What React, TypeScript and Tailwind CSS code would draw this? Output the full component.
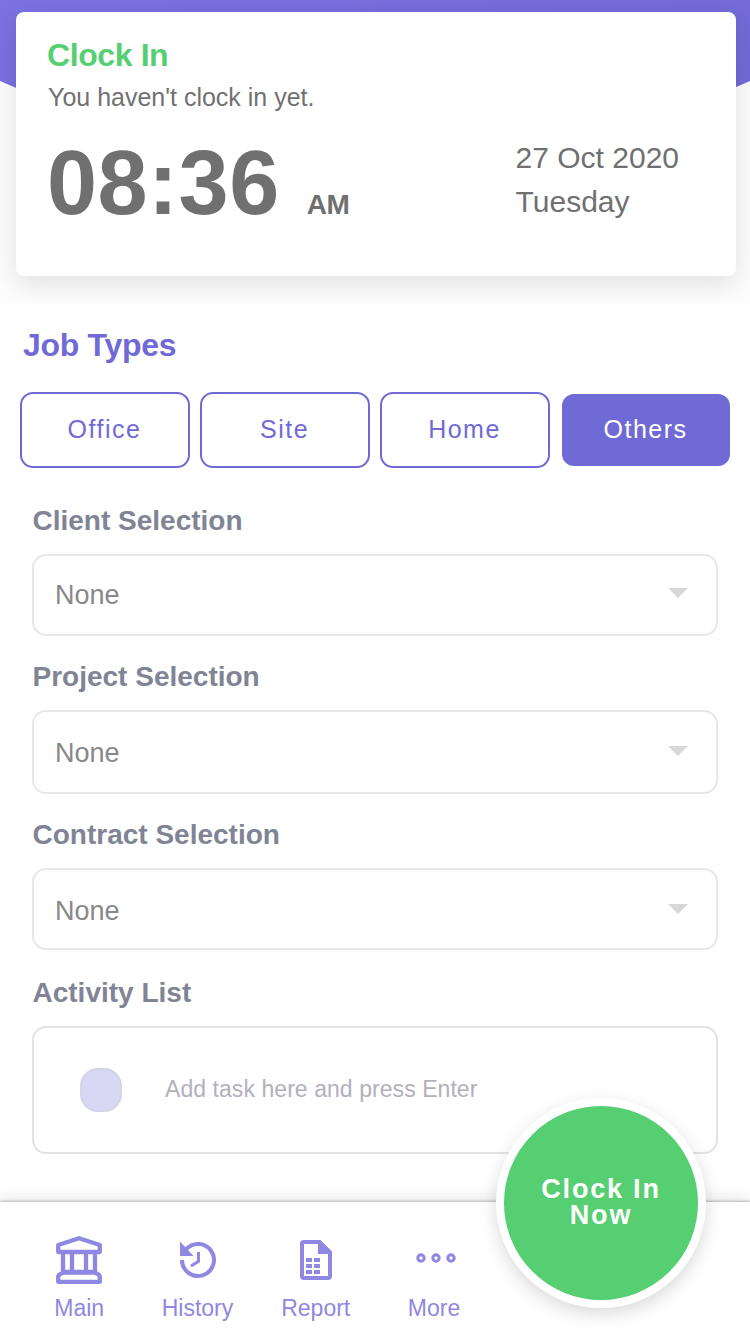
import React from "react";

const jobTypes = [
  { label: "Office", active: false },
  { label: "Site", active: false },
  { label: "Home", active: false },
  { label: "Others", active: true },
];

function SelectField({ label, box, pad, arrow }: { label: string; box: string; pad: string; arrow: string }) {
  return (
    <div>
      <div className="h-8 pl-[0.500px] text-[28px] leading-8 font-bold text-[#808495]">{label}</div>
      <div className={"mt-[17px] flex items-center justify-between rounded-[14px] border-2 border-[#e8e8e8] pr-7 pl-[21px] " + box}>
        <span className={"text-[27px] leading-8 text-[#888888] " + pad}>None</span>
        <svg className={"h-[10px] w-5 " + arrow} viewBox="0 0 20 10">
          <path d="M0 0H20L10 10Z" fill="#d8d8d8" />
        </svg>
      </div>
    </div>
  );
}

function MainIcon() {
  return (
    <svg width="48" height="50" viewBox="0 0 48 50" fill="none" stroke="#8f88e2" strokeWidth="4.300" strokeLinejoin="round">
      <path d="M3.200 17V10L24 3.200L44.800 10V17Z" />
      <path d="M8 17V38M17 17V38M31 17V38M40 17V38" />
      <path d="M8 37H40Q40.500 38.500 42.500 39Q44.800 39.800 44.800 42V46.800H3.200V42Q3.200 39.800 5.500 39Q7.500 38.500 8 37Z" />
      <path d="M7 37.600H41" />
    </svg>
  );
}

function HistoryIcon() {
  return (
    <svg className="ml-[0.500px]" width="38" height="38" viewBox="0 0 38 38" fill="none">
      <path d="M7 8.400A16 16 0 1 1 3 19" stroke="#8f88e2" strokeWidth="4" />
      <path d="M1 0.500V15H14.500Z" fill="#8f88e2" />
      <path d="M19.500 11V20.300L12 25" stroke="#8f88e2" strokeWidth="3" />
    </svg>
  );
}

function ReportIcon() {
  return (
    <svg width="32" height="40" viewBox="0 0 32 40">
      <path fill="#8f88e2" fillRule="evenodd" d="M4 0H20.500L32 11.500V36Q32 40 28 40H4Q0 40 0 36V4Q0 0 4 0ZM4 4V36H28V14H18V4Z" />
      <path fill="#8f88e2" d="M6 18h6v4H6zM14 18h6v4h-6zM6 24h6v4H6zM14 24h6v4h-6zM6 30h6v4H6zM14 30h6v4h-6z" />
    </svg>
  );
}

function MoreIcon() {
  return (
    <svg className="mb-1 ml-[3px]" width="40" height="10" viewBox="0 0 40 10" fill="none" stroke="#8f88e2" strokeWidth="3">
      <circle cx="5" cy="5" r="3.200" />
      <circle cx="20" cy="5" r="3.200" />
      <circle cx="35" cy="5" r="3.200" />
    </svg>
  );
}

const navItems = [
  { label: "Main", icon: <MainIcon /> },
  { label: "History", icon: <HistoryIcon /> },
  { label: "Report", icon: <ReportIcon /> },
  { label: "More", icon: <MoreIcon /> },
];

export default function App() {
  return (
    <div className="relative flex h-[1334px] w-[750px] flex-col overflow-hidden bg-[#fdfdfd] font-['Liberation_Sans',Arial,sans-serif]">
      <svg className="absolute top-0 left-0" width="750" height="250" viewBox="0 0 750 250">
        <defs>
          <linearGradient id="header" x1="0" y1="0" x2="1" y2="0.300">
            <stop offset="0" stopColor="#7a72e2" />
            <stop offset="1" stopColor="#726bd8" />
          </linearGradient>
        </defs>
        <path d="M0 0H750V81Q375 250 0 81Z" fill="url(#header)" />
      </svg>

      <section className="relative mx-[14px] mt-3 ml-4 flex h-[264px] shrink-0 flex-col rounded-lg bg-white px-8 pt-6 shadow-[0_8px_28px_rgba(0,0,0,0.12)]">
        <h1 className="-ml-px text-[32px] leading-[38px] font-bold tracking-[-0.400px] text-[#55cf72]">Clock In</h1>
        <p className="mt-2 text-[25px] leading-[30px] text-[#717171]">You haven't clock in yet.</p>
        <div className="mt-[19px] flex justify-between pr-[25px] text-[#707070]">
          <div className="flex items-baseline font-bold">
            <span className="-ml-px text-[90px] leading-[104px] tracking-[0.500px]">08:36</span>
            <span className="ml-[27px] text-[28px] tracking-[-0.300px]">AM</span>
          </div>
          <div className="mt-[5px] text-[30px] leading-[44px]">
            <div>27 Oct 2020</div>
            <div>Tuesday</div>
          </div>
        </div>
      </section>

      <main className="relative mt-7 h-[898px] shrink-0 rounded-lg bg-white px-5 pt-[23px]">
        <h2 className="pl-[3px] text-[32px] leading-9 font-bold tracking-[-0.300px] text-[#706ad7]">Job Types</h2>
        <div className="mt-[29px] flex gap-[10px]">
          {jobTypes.map((job) => (
            <button
              key={job.label}
              className={
                job.active
                  ? "my-[2px] ml-[2px] h-[72px] w-[168px] rounded-[12px] bg-[#706ad7] pr-px text-[25px] tracking-[1.500px] text-white"
                  : "h-[76px] w-[170px] rounded-[13px] border-2 border-[#706ad7] bg-white pr-px text-[25px] tracking-[1.500px] text-[#706ad7]"
              }
            >
              {job.label}
            </button>
          ))}
        </div>
        <div className="mt-[37px] flex flex-col gap-[25px] pr-3 pl-3">
          <SelectField label="Client Selection" box="h-[82px]" pad="" arrow="-mt-1" />
          <SelectField label="Project Selection" box="h-[84px]" pad="pt-[2px]" arrow="-mt-[2px]" />
          <SelectField label="Contract Selection" box="h-[82px]" pad="pt-1" arrow="" />
          <div className="pt-[2px]">
            <div className="h-8 pl-[0.500px] text-[28px] leading-8 font-bold text-[#808495]">Activity List</div>
            <div className="mt-[17px] flex h-32 items-center rounded-[14px] border-2 border-[#e3e3e3] pl-[46px]">
              <span className="h-11 w-[42px] rounded-[18px] border-2 border-[#d5d3e8] bg-[#d9d8f4]" />
              <span className="-mt-[3px] ml-[43px] text-[23px] leading-7 tracking-[0.060px] text-[#b2b0bd]">Add task here and press Enter</span>
            </div>
          </div>
        </div>
      </main>

      <nav className="relative flex h-[132px] shrink-0 bg-white pl-5 shadow-[0_-1px_2px_rgba(0,0,0,0.25),0_-4px_14px_rgba(0,0,0,0.10)]">
        {navItems.map((item) => (
          <a key={item.label} className="flex w-[118.300px] flex-col items-center text-[23px] leading-7 text-[#8f88e2]">
            <span className="mt-[33px] flex h-[50px] items-center">{item.icon}</span>
            <span className="mt-[9px]">{item.label}</span>
          </a>
        ))}
      </nav>

      <button className="absolute top-[1098px] left-[496px] h-[210px] w-[210px] rounded-full border-8 border-white bg-[#55cf72] pb-[3px] text-center text-[27px] leading-[26px] font-bold tracking-[1.800px] text-white shadow-[0_6px_18px_rgba(0,0,0,0.15)]">
        Clock In
        <br />
        Now
      </button>
    </div>
  );
}
